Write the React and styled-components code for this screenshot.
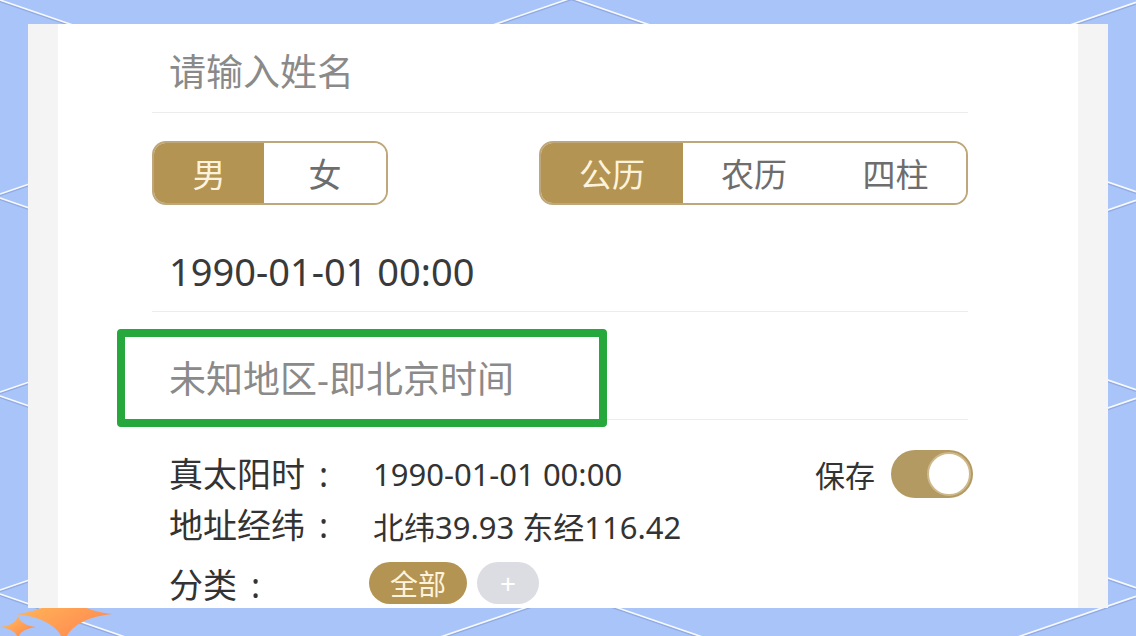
import React from "react";
import styled, { createGlobalStyle } from "styled-components";

const FONT = `"Noto Sans", "Noto Sans CJK SC", sans-serif`;
const GOLD = "#b39452";

const GlobalStyle = createGlobalStyle`
  html, body {
    margin: 0;
    padding: 0;
  }
  body {
    width: 1136px;
    height: 636px;
    overflow: hidden;
    font-family: ${FONT};
  }
`;

// diamond lattice behind the card
const K = 0.343;
const DOWN = [-396, -198, 0, 198, 396, 594];
const UP = [194, 392, 590, 788, 986];

const star = (cx, cy, rx, ry) => {
  const a = rx * 0.16;
  const b = ry * 0.16;
  return `M${cx - rx},${cy} Q${cx - a},${cy - b} ${cx},${cy - ry} Q${cx + a},${cy - b} ${cx + rx},${cy} Q${cx + a},${cy + b} ${cx},${cy + ry} Q${cx - a},${cy + b} ${cx - rx},${cy} Z`;
};

const Lattice = () => {
  const lines = [
    ...DOWN.map((c) => [0, c, 1136, c + K * 1136]),
    ...UP.map((d) => [0, d, 1136, d - K * 1136]),
  ];
  return (
    <Backdrop viewBox="0 0 1136 636" width="1136" height="636">
      <defs>
        <linearGradient id="sparkle" x1="0" y1="0" x2="1" y2="1">
          <stop offset="0" stopColor="#ffc25a" />
          <stop offset="1" stopColor="#ff7f4f" />
        </linearGradient>
      </defs>
      {lines.map(([x1, y1, x2, y2], i) => (
        <g key={i}>
          <line x1={x1} y1={y1 + 1.6} x2={x2} y2={y2 + 1.6} stroke="#7f98cc" strokeOpacity="0.55" strokeWidth="1.4" />
          <line x1={x1} y1={y1} x2={x2} y2={y2} stroke="#ffffff" strokeOpacity="0.9" strokeWidth="1.6" />
        </g>
      ))}
      <path d={star(64, 614, 48, 28)} fill="url(#sparkle)" />
      <path d={star(18, 627, 18, 11)} fill="url(#sparkle)" />
    </Backdrop>
  );
};

const Page = styled.div`
  position: relative;
  width: 1136px;
  height: 636px;
  box-sizing: border-box;
  padding: 24px 28px 0;
  background: #a9c4f9;
  overflow: hidden;
`;

const Backdrop = styled.svg`
  position: absolute;
  left: 0;
  top: 0;
`;

const Card = styled.div`
  position: relative;
  height: 584px;
  box-sizing: border-box;
  padding: 0 30px;
  background: #f4f4f5;
  overflow: hidden;
`;

const Panel = styled.div`
  height: 100%;
  box-sizing: border-box;
  padding: 0 110px 0 94px;
  background: #fff;
`;

const Field = styled.div`
  position: relative;
  height: ${(p) => p.$h}px;
  box-sizing: border-box;
  display: flex;
  align-items: flex-end;
  padding: 0 0 19px 17px;
  border-bottom: 1px solid #ededed;
  font-size: ${(p) => p.$size}px;
  line-height: 42px;
  color: ${(p) => (p.$muted ? "#8a8a8a" : "#3a3a3a")};
`;

const Highlight = styled.div`
  position: absolute;
  left: -35px;
  top: 17px;
  width: 490px;
  height: 98px;
  box-sizing: border-box;
  border: 8px solid #27a83c;
  border-radius: 4px;
`;

const SegRow = styled.div`
  display: flex;
  justify-content: space-between;
  margin-top: 28px;
`;

const Segment = styled.div`
  display: flex;
  height: 64px;
  box-sizing: border-box;
  border: 2px solid #bea77a;
  border-radius: 14px;
  overflow: hidden;
`;

const SegItem = styled.div`
  width: ${(p) => p.$w}px;
  display: flex;
  align-items: center;
  justify-content: center;
  font-size: 33px;
  background: ${(p) => (p.$active ? GOLD : "#fff")};
  color: ${(p) => (p.$active ? "#fdf3dc" : "#6d6d6d")};
`;

const Info = styled.div`
  display: flex;
  flex-direction: column;
  padding: 30px 0 0 17px;
`;

const InfoRow = styled.div`
  display: flex;
  align-items: center;
  height: ${(p) => p.$h || 48}px;
  margin-top: ${(p) => p.$gap || 0}px;
`;

const Label = styled.span`
  width: 204px;
  flex-shrink: 0;
  font-size: 34px;
  line-height: 40px;
  color: #333;
`;

const Colon = styled.span`
  padding-left: 14px;
`;

const Value = styled.span`
  font-size: 31px;
  color: #333;
`;

const SaveBox = styled.div`
  display: flex;
  align-items: center;
  gap: 16px;
  margin-left: auto;
  margin-right: -5px;
  font-size: 30px;
  color: #333;
`;

const Toggle = styled.div`
  width: 82px;
  height: 48px;
  box-sizing: border-box;
  padding: 2px;
  display: flex;
  justify-content: flex-end;
  border-radius: 24px;
  background: #b39a62;
`;

const Knob = styled.div`
  width: 44px;
  height: 44px;
  box-sizing: border-box;
  border-radius: 50%;
  border: 2px solid #cdb98c;
  background: #fff;
`;

const Chips = styled.div`
  display: flex;
  gap: 10px;
  margin: -4px 0 0 -4px;
`;

const Chip = styled.span`
  height: 42px;
  box-sizing: border-box;
  padding: 0 ${(p) => (p.$add ? 23 : 21)}px;
  display: flex;
  align-items: center;
  border-radius: 21px;
  font-size: 28px;
  background: ${(p) => (p.$add ? "#dcdde3" : GOLD)};
  color: ${(p) => (p.$add ? "#fff" : "#fdf3dc")};
`;

export default function App() {
  return (
    <>
      <GlobalStyle />
      <Page>
        <Lattice />
        <Card>
          <Panel>
            <Field $h={89} $size={37} $muted>
              请输入姓名
            </Field>

            <SegRow>
              <Segment>
                <SegItem $w={110} $active>男</SegItem>
                <SegItem $w={122}>女</SegItem>
              </Segment>
              <Segment>
                <SegItem $w={142} $active>公历</SegItem>
                <SegItem $w={142}>农历</SegItem>
                <SegItem $w={141}>四柱</SegItem>
              </Segment>
            </SegRow>

            <Field $h={107} $size={38}>
              1990-01-01 00:00
            </Field>

            <Field $h={108} $size={37} $muted>
              未知地区-即北京时间
              <Highlight />
            </Field>

            <Info>
              <InfoRow>
                <Label>真太阳时<Colon>:</Colon></Label>
                <Value>1990-01-01 00:00</Value>
                <SaveBox>
                  保存
                  <Toggle>
                    <Knob />
                  </Toggle>
                </SaveBox>
              </InfoRow>
              <InfoRow $gap={3}>
                <Label>地址经纬<Colon>:</Colon></Label>
                <Value>北纬39.93 东经116.42</Value>
              </InfoRow>
              <InfoRow $gap={15} $h={42}>
                <Label>分类<Colon>:</Colon></Label>
                <Chips>
                  <Chip>全部</Chip>
                  <Chip $add>+</Chip>
                </Chips>
              </InfoRow>
            </Info>
          </Panel>
        </Card>
      </Page>
    </>
  );
}
